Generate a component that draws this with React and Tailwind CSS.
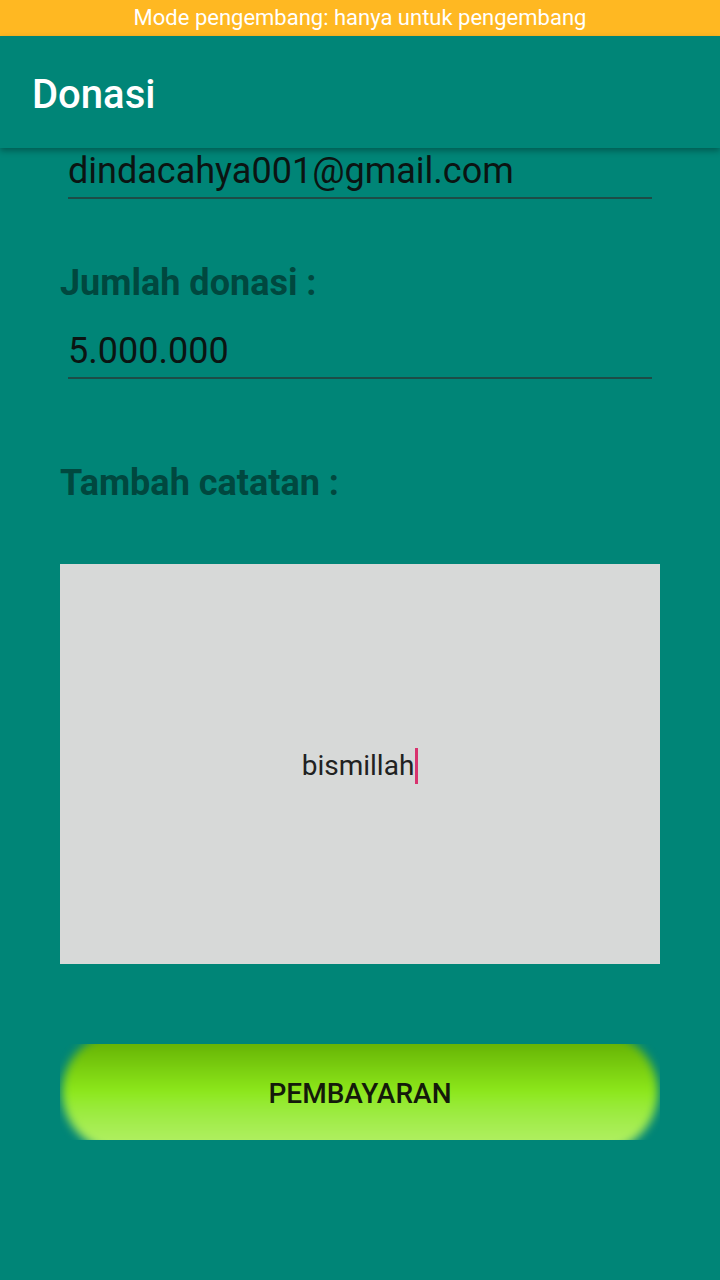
import React from 'react';

const font = { fontFamily: 'Roboto, "Noto Sans", sans-serif' };

function Field({ value }) {
  return (
    <div className="mx-[8px] border-b-2 border-[#1d4d47] h-[51px] flex items-end pb-[8px]">
      <span className="text-[36px] leading-none text-[#0b1412]">{value}</span>
    </div>
  );
}

export default function App() {
  return (
    <div className="w-[720px] h-[1280px] bg-[#008577] flex flex-col overflow-hidden" style={font}>
      <div className="h-[36px] bg-[#ffb822] flex items-center justify-center">
        <span className="text-white text-[22px] leading-none">Mode pengembang: hanya untuk pengembang</span>
      </div>
      <div className="relative z-10 h-[112px] bg-[#008577] flex items-center px-[32px] pt-[6px] shadow-[0_3px_6px_rgba(0,0,0,0.3)]">
        <h1 className="text-white text-[40px] font-medium leading-none">Donasi</h1>
      </div>

      <div className="px-[60px] flex flex-col">
        <Field value="dindacahya001@gmail.com" />
        <div className="mt-[66px] text-[#00483f] text-[36px] font-bold leading-none">Jumlah donasi :</div>
        <div className="mt-[27px]">
          <Field value="5.000.000" />
        </div>
        <div className="mt-[86px] text-[#00483f] text-[36px] font-bold leading-none">Tambah catatan :</div>

        <div className="mt-[63px] h-[400px] pt-[4px] bg-[#d7d9d8] flex items-center justify-center">
          <span className="text-[28px] text-[#212121] leading-none">bismillah</span>
          <span className="ml-[1px] w-[3px] h-[36px] bg-[#d8336e]" />
        </div>

        <div className="mt-[80px] relative h-[96px] pt-[4px] overflow-hidden flex items-center justify-center">
          <div className="absolute inset-y-[-12px] inset-x-[2px] rounded-[64px] blur-[5px] bg-gradient-to-b from-[#5ea800] via-[#8de81a] to-[#b6f06a]" />
          <span className="relative text-[#141a0a] text-[28px] font-medium leading-none">PEMBAYARAN</span>
        </div>
      </div>
    </div>
  );
}
